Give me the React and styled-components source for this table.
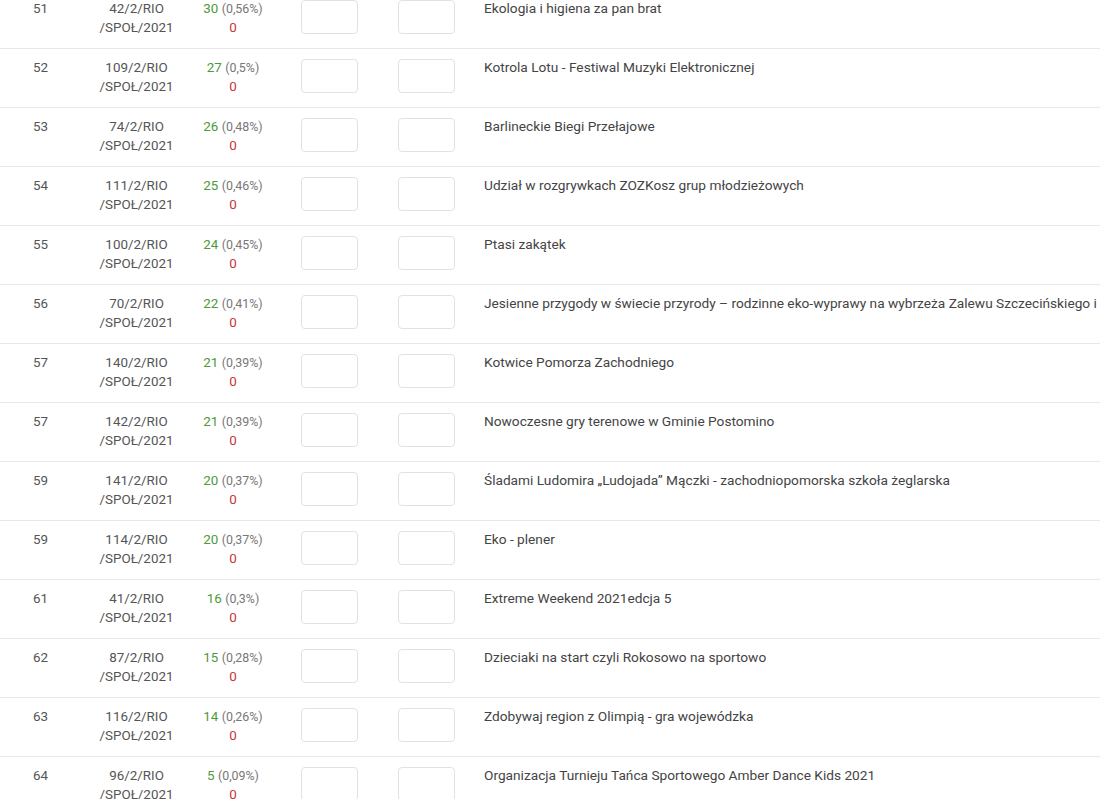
import styled, { createGlobalStyle } from 'styled-components'

const GlobalStyle = createGlobalStyle`
  html, body {
    margin: 0;
    padding: 0;
    background: #fff;
    overflow: hidden;
  }
  body {
    font-family: Roboto, "Liberation Sans", Arial, sans-serif;
    font-size: 13.4px;
    color: #555;
  }
`

const Table = styled.div`
  margin-top: -11px;
  width: 1100px;
  overflow: hidden;
`

const Row = styled.div`
  display: grid;
  grid-template-columns: 80px 113px 80px 97px 97px 1fr;
  height: 58px;
  border-top: 1px solid #e8e8e8;
`

const Cell = styled.div`
  padding-top: 9px;
  line-height: 19px;
  text-align: ${props => props.center ? 'center' : 'left'};
  padding-left: ${props => props.indent || 0}px;
  min-width: 0;
`

const Place = styled(Cell)`
  color: #555;
`

const Code = styled(Cell)`
  color: #555;
`

const Votes = styled.span`
  color: #4d9a3a;
`

const Percent = styled.span`
  color: #777;
  font-size: 12.4px;
`

const Against = styled.div`
  color: #c4363c;
`

const BoxCell = styled.div`
  padding: 10px 0 0 28px;
`

const InputBox = styled.div`
  width: 55px;
  height: 32px;
  border: 1px solid #e2e2e2;
  border-radius: 4px;
  background: #fff;
`

const Title = styled(Cell)`
  color: #444;
  font-size: 13.7px;
  white-space: nowrap;
  overflow: hidden;
`

const rows = [
  ['51', '42/2/RIO', 30, '0,56%', 'Ekologia i higiena za pan brat'],
  ['52', '109/2/RIO', 27, '0,5%', 'Kotrola Lotu - Festiwal Muzyki Elektronicznej'],
  ['53', '74/2/RIO', 26, '0,48%', 'Barlineckie Biegi Przełajowe'],
  ['54', '111/2/RIO', 25, '0,46%', 'Udział w rozgrywkach ZOZKosz grup młodzieżowych'],
  ['55', '100/2/RIO', 24, '0,45%', 'Ptasi zakątek'],
  ['56', '70/2/RIO', 22, '0,41%', 'Jesienne przygody w świecie przyrody – rodzinne eko-wyprawy na wybrzeża Zalewu Szczecińskiego i Kanału Piastowskiego'],
  ['57', '140/2/RIO', 21, '0,39%', 'Kotwice Pomorza Zachodniego'],
  ['57', '142/2/RIO', 21, '0,39%', 'Nowoczesne gry terenowe w Gminie Postomino'],
  ['59', '141/2/RIO', 20, '0,37%', 'Śladami Ludomira „Ludojada” Mączki - zachodniopomorska szkoła żeglarska'],
  ['59', '114/2/RIO', 20, '0,37%', 'Eko - plener'],
  ['61', '41/2/RIO', 16, '0,3%', 'Extreme Weekend 2021edcja 5'],
  ['62', '87/2/RIO', 15, '0,28%', 'Dzieciaki na start czyli Rokosowo na sportowo'],
  ['63', '116/2/RIO', 14, '0,26%', 'Zdobywaj region z Olimpią - gra wojewódzka'],
  ['64', '96/2/RIO', 5, '0,09%', 'Organizacja Turnieju Tańca Sportowego Amber Dance Kids 2021'],
]

function App () {
  return (
    <>
      <GlobalStyle />
      <Table>
        {rows.map(([place, code, votes, pct, title], i) => (
          <Row key={i}>
            <Place indent={33}>{place}</Place>
            <Code center>
              {code}<br />/SPOŁ/2021
            </Code>
            <Cell center>
              <Votes>{votes}</Votes> <Percent>({pct})</Percent>
              <Against>0</Against>
            </Cell>
            <BoxCell><InputBox /></BoxCell>
            <BoxCell><InputBox /></BoxCell>
            <Title indent={17}>{title}</Title>
          </Row>
        ))}
      </Table>
    </>
  )
}

export default App
